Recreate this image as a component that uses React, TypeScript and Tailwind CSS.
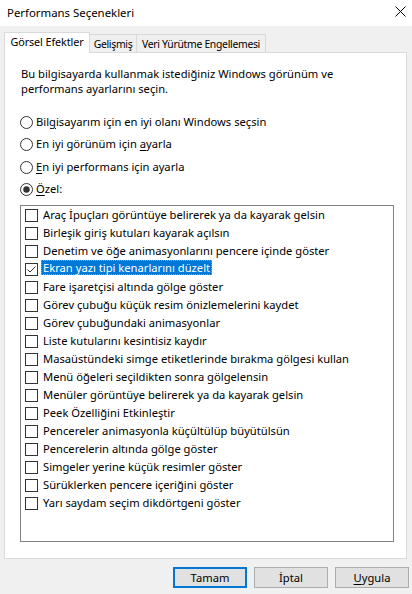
import React from "react";

const items = [
  "Araç İpuçları görüntüye belirerek ya da kayarak gelsin",
  "Birleşik giriş kutuları kayarak açılsın",
  "Denetim ve öğe animasyonlarını pencere içinde göster",
  "Ekran yazı tipi kenarlarını düzelt",
  "Fare işaretçisi altında gölge göster",
  "Görev çubuğu küçük resim önizlemelerini kaydet",
  "Görev çubuğundaki animasyonlar",
  "Liste kutularını kesintisiz kaydır",
  "Masaüstündeki simge etiketlerinde bırakma gölgesi kullan",
  "Menü öğeleri seçildikten sonra gölgelensin",
  "Menüler görüntüye belirerek ya da kayarak gelsin",
  "Peek Özelliğini Etkinleştir",
  "Pencereler animasyonla küçültülüp büyütülsün",
  "Pencerelerin altında gölge göster",
  "Simgeler yerine küçük resimler göster",
  "Sürüklerken pencere içeriğini göster",
  "Yarı saydam seçim dikdörtgeni göster",
];

function Radio({ checked }: { checked?: boolean }) {
  return (
    <svg width="13" height="13" viewBox="0 0 13 13" className="shrink-0">
      <circle cx="6.5" cy="6.5" r="6" fill="white" stroke="#333333" strokeWidth="1" />
      {checked && <circle cx="6.5" cy="6.5" r="3.2" fill="#333333" />}
    </svg>
  );
}

function Check({ checked }: { checked?: boolean }) {
  return (
    <svg width="13" height="13" viewBox="0 0 13 13" className="shrink-0">
      <rect x="0.5" y="0.5" width="12" height="12" fill="white" stroke="#333333" strokeWidth="1" />
      {checked && (
        <path d="M2.5 6.5 L5 9 L10.5 3.5" fill="none" stroke="#333333" strokeWidth="1" />
      )}
    </svg>
  );
}

export default function App() {
  return (
    <div className="w-[412px] h-[594px] bg-[#f0f0f0] text-[11.2px] text-black font-['Noto_Sans',sans-serif] flex flex-col overflow-hidden whitespace-nowrap">
      {/* Title bar */}
      <div className="h-[26px] bg-white flex items-center justify-between pl-[7px] pr-[6px] shrink-0">
        <span className="leading-[16px] text-[11.4px]">Performans Seçenekleri</span>
        <svg width="11" height="11" viewBox="0 0 11 11" className="mt-[-3px]">
          <path d="M0.5 0.5 L10.5 10.5 M10.5 0.5 L0.5 10.5" stroke="#000" strokeWidth="1" />
        </svg>
      </div>

      {/* Tabs */}
      <div className="h-[26px] flex items-end pl-[4px] shrink-0">
        <div className="relative z-10 w-[86px] shrink-0 h-[21px] -mb-px bg-white border border-b-0 border-[#d9d9d9] flex items-center justify-center leading-[16px] pb-[2px] text-[10.8px] tracking-[-0.1px]">
          Görsel Efektler
        </div>
        <div className="w-[47px] shrink-0 h-[18px] border-t border-r border-[#d9d9d9] flex items-center justify-center leading-[16px] text-[10.4px] tracking-[-0.3px]">
          Gelişmiş
        </div>
        <div className="w-[129px] shrink-0 h-[18px] border-t border-r border-[#d9d9d9] flex items-center justify-center leading-[16px] text-[10.4px] tracking-[-0.3px]">
          Veri Yürütme Engellemesi
        </div>
      </div>

      {/* Panel */}
      <div className="ml-[4px] w-[403px] h-[507px] bg-white border border-[#d9d9d9] pl-[15px] pt-[13px] flex flex-col shrink-0">
        <p className="leading-[15px] pl-[1px]">
          Bu bilgisayarda kullanmak istediğiniz Windows görünüm ve
          <br />
          performans ayarlarını seçin.
        </p>

        <div className="mt-[15px] flex flex-col">
          <div className="h-[22.5px] flex items-center gap-[3px]">
            <Radio />
            <span>
              Bil<span className="underline underline-offset-2">g</span>isayarım için en iyi olanı Windows seçsin
            </span>
          </div>
          <div className="h-[22.5px] flex items-center gap-[3px]">
            <Radio />
            <span>
              En iyi görünüm için <span className="underline underline-offset-2">a</span>yarla
            </span>
          </div>
          <div className="h-[22.5px] flex items-center gap-[3px]">
            <Radio />
            <span>
              <span className="underline underline-offset-2">E</span>n iyi performans için ayarla
            </span>
          </div>
          <div className="h-[22.5px] flex items-center gap-[3px]">
            <Radio checked />
            <span>
              <span className="underline underline-offset-2">Ö</span>zel:
            </span>
          </div>
        </div>

        <div className="mt-[4px] w-[374px] h-[337px] border border-[#828282] flex flex-col">
          {items.map((t, i) => (
            <div key={i} className="h-[18px] flex items-center pl-[4px] shrink-0">
              <Check checked={i === 3} />
              {i === 3 ? (
                <span className="ml-[3px] -mt-[3px] h-[15px] leading-[13px] px-[1px] bg-[#0078d7] text-white border border-dotted border-[#ff8728]">
                  {t}
                </span>
              ) : (
                <span className="ml-[5px] leading-[16px]">{t}</span>
              )}
            </div>
          ))}
        </div>
      </div>

      {/* Buttons */}
      <div className="mt-[8px] flex justify-end gap-[7px] pr-[3px]">
        <button className="w-[74px] h-[21px] bg-[#e1e1e1] border-2 border-[#0078d7] flex items-center justify-center leading-[16px]">
          Tamam
        </button>
        <button className="w-[74px] h-[21px] bg-[#e1e1e1] border border-[#adadad] flex items-center justify-center leading-[16px]">
          İptal
        </button>
        <button className="w-[74px] h-[21px] bg-[#e1e1e1] border border-[#adadad] flex items-center justify-center leading-[16px]">
          <span>
            <span className="underline underline-offset-2">U</span>ygula
          </span>
        </button>
      </div>
    </div>
  );
}
